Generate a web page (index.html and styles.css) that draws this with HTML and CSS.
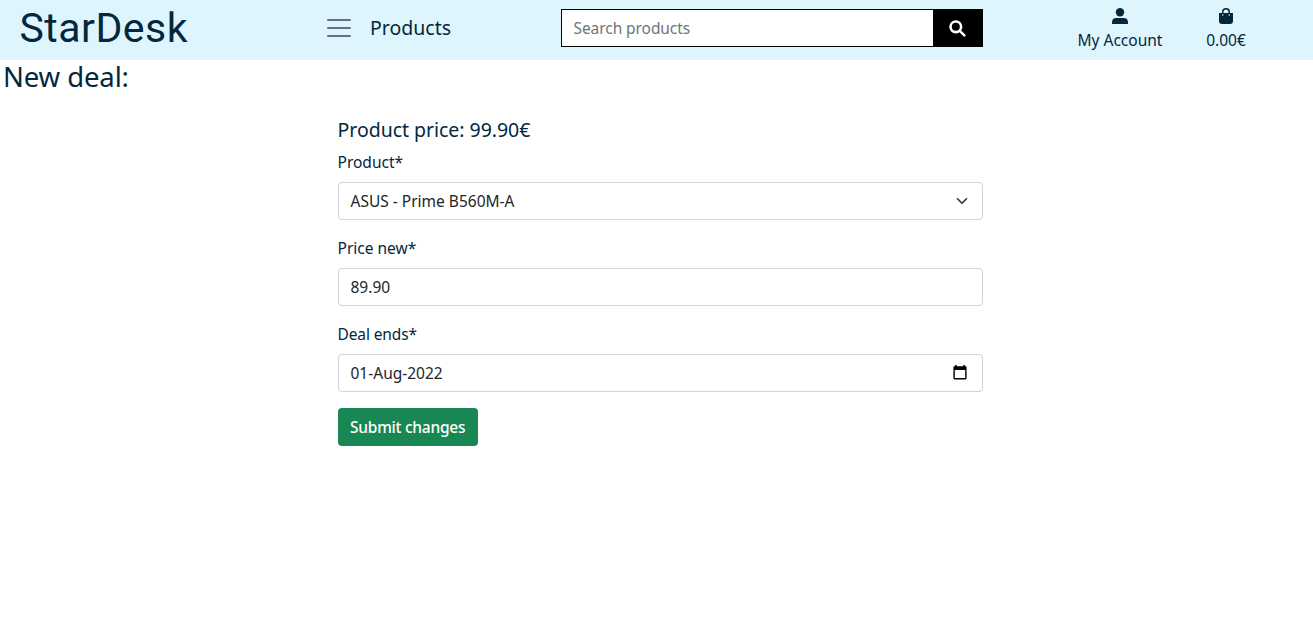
FILE: index.html
```html
<!DOCTYPE html>
<html lang="en">
<head>
<meta charset="utf-8">
<title>StarDesk - New deal</title>
<link rel="stylesheet" href="styles.css">
</head>
<body>
<header class="topbar">
  <a class="logo">StarDesk</a>
  <nav class="menu">
    <svg class="burger" viewBox="0 0 24 20"><path d="M1 2H23M1 10H23M1 18H23"/></svg>
    <span class="menu-label">Products</span>
  </nav>
  <form class="search">
    <div class="search-field"><span class="search-hint">Search products</span></div>
    <div class="search-button"><svg width="17" height="17" viewBox="0 0 17 17"><circle cx="6.8" cy="6.8" r="5.3"/><path d="M10.8 10.8L15.3 15.3"/></svg></div>
  </form>
  <a class="account">
    <svg class="icon" width="16" height="16" viewBox="0 0 16 16"><circle cx="8" cy="4.2" r="4.2"/><path d="M0 16V14.4Q0 10 4.6 10H11.4Q16 10 16 14.4V16Z"/></svg>
    <span class="account-label">My Account</span>
  </a>
  <a class="cart">
    <svg class="icon" width="14" height="16" viewBox="0 0 14 16"><path fill-rule="evenodd" d="M0 5H3V4A4 4 0 0 1 11 4V5H14V13Q14 16 11 16H3Q0 16 0 13ZM4.5 5H9.5V4A2.5 2.5 0 0 0 4.5 4ZM3.75 6.3A.75.75 0 0 0 3.75 7.8A.75.75 0 0 0 3.75 6.3ZM10.25 6.3A.75.75 0 0 0 10.25 7.8A.75.75 0 0 0 10.25 6.3Z"/></svg>
    <span class="cart-label">0.00€</span>
  </a>
</header>
<main>
  <h1 class="title"><span>New deal:</span></h1>
  <form class="deal">
    <h2 class="price"><span>Product price: 99.90€</span></h2>
    <label class="label">Product*</label>
    <div class="control"><span>ASUS - Prime B560M-A</span><svg class="chevron" width="16" height="16" viewBox="0 0 16 16"><path d="M2 5l6 6 6-6"/></svg></div>
    <label class="label">Price new*</label>
    <div class="control"><span>89.90</span></div>
    <label class="label label-ends">Deal ends*</label>
    <div class="control"><span>01-Aug-2022</span><svg class="calendar" width="14" height="15" viewBox="0 0 14 15"><path fill-rule="evenodd" d="M2 0H3.6V1.3H10.4V0H12V1.3H12.6Q13.6 1.3 13.6 2.5V13.3Q13.6 14.5 12.4 14.5H1.6Q.4 14.5 .4 13.3V2.5Q.4 1.3 1.4 1.3H2ZM1.8 5V13.1H12.2V5Z"/></svg></div>
    <button type="button" class="submit"><span>Submit changes</span></button>
  </form>
</main>
</body>
</html>
```
FILE: styles.css
```css
* { box-sizing: border-box; }
body {
  margin: 0;
  background: #fff;
  color: #03283e;
  font: 15.5px/24px "Noto Sans", sans-serif;
  white-space: nowrap;
}
.topbar { display: flex; height: 60px; background: #dff5fe; }
.logo {
  width: 327px;
  padding-left: 19.5px;
  font: 41px/56px Roboto, sans-serif;
  letter-spacing: 0.5px;
}
.menu { display: flex; width: 234px; height: 56px; align-items: center; gap: 19px; }
.burger { width: 24px; height: 20px; fill: none; stroke: #686f7b; stroke-width: 2; stroke-linecap: round; }
.menu-label { font-size: 19.5px; }
.search { display: flex; width: 422px; height: 38px; margin-top: 9px; border: 1px solid #000; }
.search-field { flex: 1; padding: 6px 11.5px; background: #fff; color: #6c757d; letter-spacing: -0.07px; }
.search-button { display: flex; width: 49px; align-items: center; justify-content: center; background: #000; }
.search-button svg { fill: none; stroke: #fff; stroke-width: 2.6; stroke-linecap: round; }
.account, .cart { display: flex; flex-direction: column; align-items: center; padding-top: 8px; gap: 4px; }
.account { width: 86px; margin-left: 94px; }
.cart { width: 42px; margin-left: 42px; }
.icon { flex: none; fill: #03283e; }
.title { margin: 0; padding-left: 3px; font-size: 27.5px; line-height: 34px; font-weight: 400; letter-spacing: -0.12px; }
.deal { width: 645px; margin: 24px 0 0 338px; }
.price { margin: 0 0 8px -0.5px; font-size: 19.5px; line-height: 24px; font-weight: 400; letter-spacing: -0.03px; }
.label { display: block; height: 24px; margin: 0 0 8px -0.5px; }
.label-ends { letter-spacing: -0.12px; }
.control {
  display: flex;
  height: 38px;
  align-items: center;
  justify-content: space-between;
  margin-bottom: 16px;
  padding: 0 12px 0 11.5px;
  border: 1px solid #ced4da;
  border-radius: 4px;
  color: #212529;
}
.chevron { width: 12px; height: 12px; margin-right: 2px; fill: none; stroke: #343a40; stroke-width: 2.3; stroke-linecap: round; stroke-linejoin: round; }
.calendar { margin: -1px 3px 0 0; fill: #000; }
.submit {
  width: 140px;
  height: 38px;
  padding: 0 12px;
  border: 0;
  border-radius: 4px;
  background: #198754;
  color: #fff;
  font: 500 15.5px/24px "Noto Sans", sans-serif;
  letter-spacing: -0.24px;
  text-align: left;
}
```
